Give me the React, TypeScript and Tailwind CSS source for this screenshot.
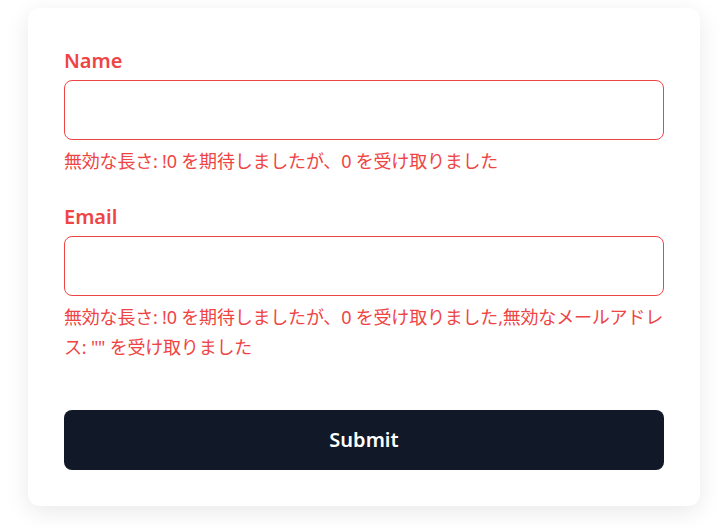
import { useState } from 'react';

type Field = {
  key: 'name' | 'email';
  label: string;
  type: string;
  error: string;
};

const fields: Field[] = [
  {
    key: 'name',
    label: 'Name',
    type: 'text',
    error: '無効な長さ: !0 を期待しましたが、0 を受け取りました',
  },
  {
    key: 'email',
    label: 'Email',
    type: 'email',
    error: '無効な長さ: !0 を期待しましたが、0 を受け取りました,無効なメールアドレス: "" を受け取りました',
  },
];

export default function App() {
  const [values, setValues] = useState({ name: '', email: '' });

  return (
    <div
      className="min-h-screen bg-white pt-2"
      style={{ fontFamily: '"Noto Sans", "Noto Sans CJK JP", sans-serif' }}
    >
      <form
        className="ml-[28px] w-[672px] rounded-xl bg-white p-9 shadow-[0_6px_24px_rgba(0,0,0,0.09)]"
        onSubmit={(e) => e.preventDefault()}
      >
        <div className="flex flex-col gap-6">
          {fields.map((f) => (
            <div key={f.key} className="flex flex-col">
              <label
                htmlFor={f.key}
                className="mb-[5px] pt-[3px] text-xl leading-7 font-semibold text-[#ef4444]"
              >
                {f.label}
              </label>
              <input
                id={f.key}
                type={f.type}
                value={values[f.key]}
                onChange={(e) => setValues({ ...values, [f.key]: e.target.value })}
                className="h-[60px] w-full rounded-lg border border-[#ef4444] px-4 text-lg outline-none"
              />
              <p className="mt-1.5 text-lg leading-[30px] tracking-[-0.2px] text-[#ef4444]">{f.error}</p>
            </div>
          ))}
        </div>

        <button
          type="submit"
          className="mt-12 h-[60px] w-full rounded-lg bg-[#111827] text-xl font-semibold text-white"
        >
          Submit
        </button>
      </form>
    </div>
  );
}
